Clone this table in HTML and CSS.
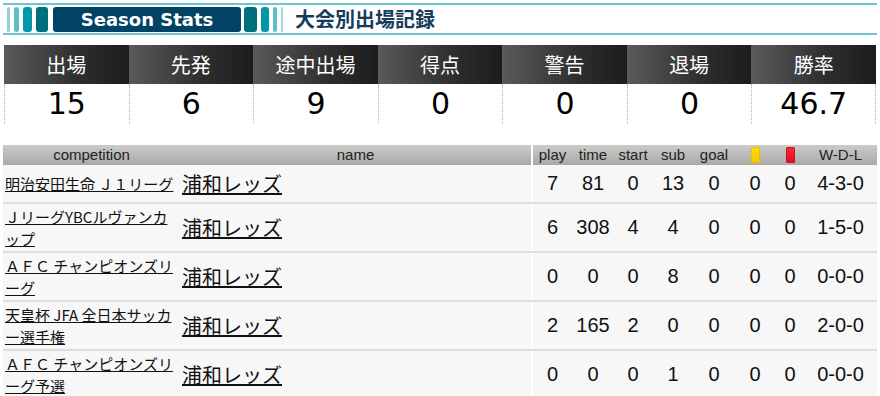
FILE: index.html
```html
<!DOCTYPE html>
<html lang="ja">
<head>
<meta charset="utf-8">
<link rel="stylesheet" href="styles.css">
</head>
<body>
<div class="page">
  <div class="title">
    <span class="bar b1"></span><span class="bar b2"></span><span class="bar b3"></span><span class="bar b4"></span>
    <span class="badge">Season Stats</span>
    <span class="bar b5"></span><span class="bar b6"></span><span class="bar b7"></span><span class="bar b8"></span>
    <h2 class="title-text">大会別出場記録</h2>
  </div>

  <div class="stats">
    <div class="s-head">出場</div><div class="s-head">先発</div><div class="s-head">途中出場</div><div class="s-head">得点</div><div class="s-head">警告</div><div class="s-head">退場</div><div class="s-head">勝率</div>
    <div class="s-val">15</div><div class="s-val">6</div><div class="s-val">9</div><div class="s-val">0</div><div class="s-val">0</div><div class="s-val">0</div><div class="s-val last">46.7</div>
  </div>

  <table class="records">
    <colgroup>
      <col class="c-comp"><col class="c-name"><col class="c-play"><col class="c-time"><col class="c-start"><col class="c-sub"><col class="c-goal"><col class="c-y"><col class="c-r"><col class="c-wdl">
    </colgroup>
    <thead>
      <tr>
        <th>competition</th><th class="name-col">name</th><th>play</th><th>time</th><th>start</th><th>sub</th><th>goal</th>
        <th><span class="card yellow"></span></th><th><span class="card red"></span></th><th>W-D-L</th>
      </tr>
    </thead>
    <tbody>
      <tr>
        <td class="comp"><a href="#">明治安田生命 Ｊ１リーグ</a></td><td class="name name-col"><a href="#">浦和レッズ</a></td>
        <td>7</td><td>81</td><td>0</td><td>13</td><td>0</td><td>0</td><td>0</td><td>4-3-0</td>
      </tr>
      <tr>
        <td class="comp"><a href="#">ＪリーグYBCルヴァンカップ</a></td><td class="name name-col"><a href="#">浦和レッズ</a></td>
        <td>6</td><td>308</td><td>4</td><td>4</td><td>0</td><td>0</td><td>0</td><td>1-5-0</td>
      </tr>
      <tr>
        <td class="comp"><a href="#">ＡＦＣ チャンピオンズリーグ</a></td><td class="name name-col"><a href="#">浦和レッズ</a></td>
        <td>0</td><td>0</td><td>0</td><td>8</td><td>0</td><td>0</td><td>0</td><td>0-0-0</td>
      </tr>
      <tr>
        <td class="comp"><a href="#">天皇杯 JFA 全日本サッカー選手権</a></td><td class="name name-col"><a href="#">浦和レッズ</a></td>
        <td>2</td><td>165</td><td>2</td><td>0</td><td>0</td><td>0</td><td>0</td><td>2-0-0</td>
      </tr>
      <tr>
        <td class="comp"><a href="#">ＡＦＣ チャンピオンズリーグ予選</a></td><td class="name name-col"><a href="#">浦和レッズ</a></td>
        <td>0</td><td>0</td><td>0</td><td>1</td><td>0</td><td>0</td><td>0</td><td>0-0-0</td>
      </tr>
    </tbody>
  </table>
</div>
</body>
</html>
```
FILE: styles.css
```css
html, body {
  margin: 0;
  padding: 0;
  background: #fff;
}
body {
  font-family: "Noto Sans CJK JP", sans-serif;
  color: #111;
}
.page {
  padding: 3px 3px 0 3px;
}

/* title bar */
.title {
  display: flex;
  align-items: center;
  height: 28px;
  border-top: 2px solid #6cc5cf;
  border-bottom: 2px solid #6cc5cf;
  padding: 0 0 0 4px;
}
.bar {
  display: block;
  height: 25px;
  border-radius: 3px;
  margin-right: 4px;
}
.b1 { width: 3px; background: #92d2d8; }
.b2 { width: 5px; background: #5dbdc8; }
.b3 { width: 9px; background: #0098aa; }
.b4 { width: 12px; background: #006f7d; margin-right: 5px; }
.badge {
  display: block;
  width: 188px;
  height: 25px;
  line-height: 25px;
  border-radius: 3px;
  background: #004364;
  color: #fff;
  font-family: "DejaVu Sans", sans-serif;
  font-weight: bold;
  font-size: 18px;
  text-align: center;
  margin-right: 3px;
}
.b5 { width: 13px; background: #006f7d; }
.b6 { width: 8px; background: #0098aa; }
.b7 { width: 4px; background: #5dbdc8; }
.b8 { width: 2px; background: #a5d9de; margin-right: 12px; }
.title-text {
  margin: 0;
  font-size: 20px;
  font-weight: bold;
  color: #163c5c;
  line-height: 28px;
}

/* summary stats */
.stats {
  display: grid;
  grid-template-columns: repeat(7, 1fr);
  margin: 10px 1px 0 1px;
}
.s-head {
  height: 39px;
  line-height: 39px;
  text-align: center;
  color: #fff;
  font-size: 20px;
  background: linear-gradient(to right, #5a5a5a, #2e2e2e 60%, #1c1c1c);
}
.s-val {
  height: 40px;
  line-height: 40px;
  text-align: center;
  font-family: "DejaVu Sans", sans-serif;
  font-size: 30px;
  color: #000;
  border-left: 1px dotted #b0b0b0;
}
.s-val.last {
  border-right: 1px dotted #b0b0b0;
}

/* records table */
.records {
  width: 874px;
  margin-top: 21px;
  border-collapse: collapse;
  table-layout: fixed;
}
.c-comp { width: 177px; }
.c-name { width: 352px; }
.c-play { width: 40px; }
.c-time { width: 42px; }
.c-start { width: 38px; }
.c-sub { width: 42px; }
.c-goal { width: 40px; }
.c-y { width: 42px; }
.c-r { width: 28px; }
.c-wdl { width: 73px; }

.records th {
  height: 20px;
  padding: 0;
  font-family: "Liberation Sans", sans-serif;
  font-weight: normal;
  font-size: 15px;
  color: #222;
  line-height: 20px;
  text-align: center;
  background: linear-gradient(#cbcbc9, #a9a9a7);
}
.records .name-col {
  border-right: 2px solid #fff;
}
.card {
  display: inline-block;
  width: 9px;
  height: 16px;
  border-radius: 2px;
  vertical-align: middle;
  margin-top: -2px;
}
.card.yellow {
  background: linear-gradient(#ffe000, #f5c400);
  box-shadow: inset 0 0 0 1px #f0b800;
}
.card.red {
  background: linear-gradient(#ff2a36, #dd0c22);
  box-shadow: inset 0 0 0 1px #cc1020;
}

.records td {
  background: #f7f7f7;
  border-bottom: 2px solid #dedede;
  padding: 2px 2px;
  text-align: center;
  font-family: "Liberation Sans", sans-serif;
  font-size: 20px;
  color: #111;
}
.records td.comp {
  text-align: left;
  font-family: "Noto Sans CJK JP", sans-serif;
  font-size: 15px;
  line-height: 21.5px;
}
.records td.name {
  text-align: left;
  font-family: "Noto Sans CJK JP", sans-serif;
  font-size: 20px;
  line-height: 33px;
  padding-left: 2px;
}
.records a {
  color: #111;
  text-decoration: underline;
}
```
